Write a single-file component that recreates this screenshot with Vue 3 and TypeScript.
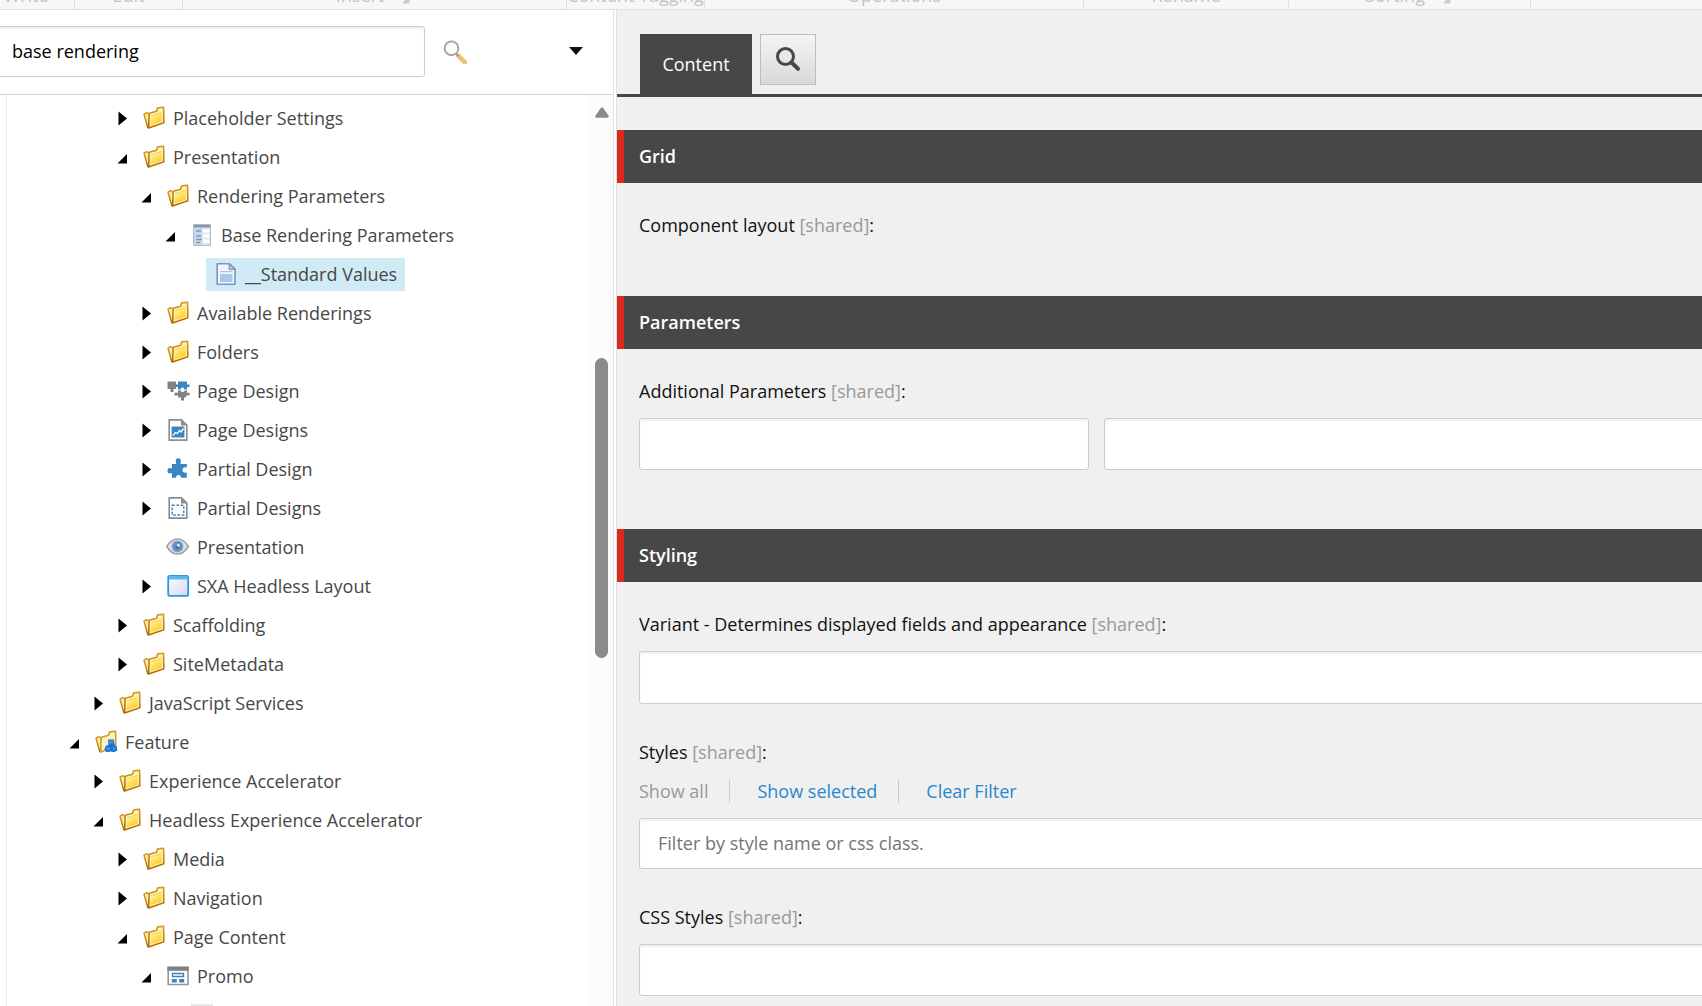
<script setup lang="ts">
import { ref } from 'vue'

type IconName =
  | 'folder' | 'template' | 'document' | 'page-design' | 'page-designs' | 'partial-design'
  | 'partial-designs' | 'eye' | 'window' | 'feature' | 'promo' | 'sheet'

interface TreeRow {
  label: string
  level: number
  icon: IconName
  state: 'open' | 'closed' | 'leaf'
}

interface RibbonGroup {
  label: string
  width: number
  launcher?: boolean
}

const searchText = ref('base rendering')
const selected = ref('__Standard Values')

const ribbon: RibbonGroup[] = [
  { label: 'Write', width: 97 },
  { label: 'Edit', width: 108 },
  { label: 'Insert', width: 384, launcher: true },
  { label: 'Content Tagging', width: 138 },
  { label: 'Operations', width: 379 },
  { label: 'Rename', width: 205 },
  { label: 'Sorting', width: 242, launcher: true },
]

const rows: TreeRow[] = [
  { label: 'Placeholder Settings', level: 2, icon: 'folder', state: 'closed' },
  { label: 'Presentation', level: 2, icon: 'folder', state: 'open' },
  { label: 'Rendering Parameters', level: 3, icon: 'folder', state: 'open' },
  { label: 'Base Rendering Parameters', level: 4, icon: 'template', state: 'open' },
  { label: '__Standard Values', level: 5, icon: 'document', state: 'leaf' },
  { label: 'Available Renderings', level: 3, icon: 'folder', state: 'closed' },
  { label: 'Folders', level: 3, icon: 'folder', state: 'closed' },
  { label: 'Page Design', level: 3, icon: 'page-design', state: 'closed' },
  { label: 'Page Designs', level: 3, icon: 'page-designs', state: 'closed' },
  { label: 'Partial Design', level: 3, icon: 'partial-design', state: 'closed' },
  { label: 'Partial Designs', level: 3, icon: 'partial-designs', state: 'closed' },
  { label: 'Presentation', level: 3, icon: 'eye', state: 'leaf' },
  { label: 'SXA Headless Layout', level: 3, icon: 'window', state: 'closed' },
  { label: 'Scaffolding', level: 2, icon: 'folder', state: 'closed' },
  { label: 'SiteMetadata', level: 2, icon: 'folder', state: 'closed' },
  { label: 'JavaScript Services', level: 1, icon: 'folder', state: 'closed' },
  { label: 'Feature', level: 0, icon: 'feature', state: 'open' },
  { label: 'Experience Accelerator', level: 1, icon: 'folder', state: 'closed' },
  { label: 'Headless Experience Accelerator', level: 1, icon: 'folder', state: 'open' },
  { label: 'Media', level: 2, icon: 'folder', state: 'closed' },
  { label: 'Navigation', level: 2, icon: 'folder', state: 'closed' },
  { label: 'Page Content', level: 2, icon: 'folder', state: 'open' },
  { label: 'Promo', level: 3, icon: 'promo', state: 'open' },
  { label: '', level: 4, icon: 'sheet', state: 'leaf' },
]
</script>

<template>
  <div class="editor">
    <svg class="defs" width="0" height="0" aria-hidden="true">
      <defs>
        <linearGradient id="gold" x1="0" y1="0" x2="0.6" y2="1">
          <stop offset="0" stop-color="#fffbe0" />
          <stop offset="0.4" stop-color="#ffe97a" />
          <stop offset="1" stop-color="#fac81a" />
        </linearGradient>
        <linearGradient id="goldEdge" x1="0" y1="0" x2="0" y2="1">
          <stop offset="0" stop-color="#d39a26" />
          <stop offset="1" stop-color="#b06c06" />
        </linearGradient>
        <linearGradient id="lilac" x1="0" y1="0" x2="1" y2="1">
          <stop offset="0" stop-color="#ffffff" />
          <stop offset="1" stop-color="#d8d4f4" />
        </linearGradient>
      </defs>
      <symbol id="i-folder" viewBox="0 0 24 24">
        <path d="M2 8.2 4.6 6.6 8 9 7 21.4 5.8 21.6Z" fill="#ffe9a0" stroke="url(#goldEdge)" stroke-width="1.4" stroke-linejoin="round" />
        <path d="M7.2 7.2 14.6 5.2 15.6 1.9 21.6 1.3 21.8 16.8 6.6 21.9Z" fill="#fff3b4" stroke="url(#goldEdge)" stroke-width="1.600" stroke-linejoin="round" />
        <path d="M9.4 9.6 19.6 6.6 19.6 15.600 8.200 19.6Z" fill="url(#gold)" />
        <path d="M9 9.8 19.6 6.4" stroke="#f1c94a" stroke-width="0.9" />
      </symbol>
      <symbol id="i-feature" viewBox="0 0 24 24">
        <path d="M2 8.2 4.6 6.6 8 9 7 21.4 5.8 21.6Z" fill="#ffe9a0" stroke="url(#goldEdge)" stroke-width="1.4" stroke-linejoin="round" />
        <path d="M7.2 7.2 14.6 5.2 15.6 1.9 21.6 1.3 21.8 16.8 6.6 21.9Z" fill="#fff0c0" stroke="#cf9a35" stroke-width="1.600" stroke-linejoin="round" />
        <path d="M14.2 9.6h5.6l1 5.6 2 1.6.6 3.6-3.4 1.8-3.2-.6-4.4.6-2-3 1.4-3.4 2.6-.8Z" fill="#1b70d2" />
        <path d="M14.6 10.4h4.4l.3 3.2-4.6.4ZM12.2 17h3.4l.4 3h-3.6ZM18.6 17h2.6l.6 2.4-2.6 1Z" fill="#3d8ee6" />
      </symbol>
      <symbol id="i-template" viewBox="0 0 24 24">
        <path d="M3.500 1.500H20.500V22.500H3.500Z" fill="#e3e6ec" stroke="#b4b8c0" />
        <path d="M4 2H20V4.500H4Z" fill="#8494b4" />
        <path d="M4 5h8v17H4Z" fill="#c3d8ee" />
        <path d="M13 6.500h6.500v3H13ZM13 11.500h6.500v3H13ZM13 16.500h6.500v3H13Z" fill="#fff" />
        <path d="M6 8h5M6 13h5M6 16.500h6M6 19.500h4" stroke="#8796b0" stroke-width="1.3" />
      </symbol>
      <symbol id="i-document" viewBox="0 0 24 24">
        <path d="M3.200 1.800H15.500L21 7V22.300H3.200Z" fill="#f1f6fd" stroke="#7d95bb" stroke-width="1.6" stroke-linejoin="round" />
        <path d="M15.200 2V7.300H21Z" fill="#c6d7ee" stroke="#7d95bb" stroke-width="1.200" stroke-linejoin="round" />
        <path d="M6 9.700h12.500" stroke="#9cb6da" />
        <path d="M6 12H18.500V20H6Z" fill="#a6c9ea" />
      </symbol>
      <symbol id="i-page-design" viewBox="0 0 24 24">
        <path d="M1.500 2.500H10V10H7.500V13H4.500V10H1.500Z" fill="#828282" />
        <path d="M12 2.500H21V5.500H23.500V8H21V10.500H18.500Q18.500 8.500 16.500 8.500T14.500 10.500H12V8H9.500V5.500H12Z" fill="#3c85c1" />
        <path d="M12 11.500H15Q14.500 13 16.500 13T18.500 11.500H21V13.800H23.500V16.500H20V18.500H18V21.500H15V18.500H12V16.500H8.500V13.800H12Z" fill="#828282" />
      </symbol>
      <symbol id="i-page-designs" viewBox="0 0 24 24">
        <path d="M3.200 1.900H15.500L20.800 7V22.100H3.200Z" fill="#fff" stroke="#8c8c8c" stroke-width="1.600" />
        <path d="M15 2V7.500H21Z" fill="#8c8c8c" />
        <path d="M5.600 8.500H18.400V19.500H5.600Z" fill="#3c85c1" />
        <path d="M7 17.500 9.500 14.500 11.500 15.500 13.500 12.500 15 14 17.500 10.500" fill="none" stroke="#fff" stroke-width="1.300" />
      </symbol>
      <symbol id="i-partial-design" viewBox="0 0 24 24">
        <path d="M8 7H10.300Q8.500 1.300 12.300 1.300T14.400 7H20.800V10.500Q16.500 9.800 16.500 13T20.800 15.500V20.800H15Q15 18 12.500 18T10 20.800H6V16Q1.500 17.500 1.500 13.700T6 11.500V7Z" fill="#3c85c1" />
      </symbol>
      <symbol id="i-partial-designs" viewBox="0 0 24 24">
        <path d="M3.200 1.900H15.500L20.800 7V22.100H3.200Z" fill="#fff" stroke="#8c8c8c" stroke-width="1.600" />
        <path d="M15 2V7.500H21Z" fill="#8c8c8c" />
        <path d="M6.200 9.200H17.800V19H6.200Z" fill="none" stroke="#3c85c1" stroke-width="1.400" stroke-dasharray="2.600 1.600" />
      </symbol>
      <symbol id="i-eye" viewBox="0 0 24 24">
        <path d="M0.800 11.500Q5 4 11.500 4T22.300 11.500Q18 19 11.500 19T0.800 11.500Z" fill="#e2e2e2" stroke="#a4a4a4" stroke-width="1.600" />
        <circle cx="11.500" cy="11.500" r="6" fill="#86abd6" />
        <circle cx="11.500" cy="11.500" r="4.800" fill="#5f90c8" />
        <circle cx="11.500" cy="11.800" r="2" fill="#47678f" />
        <circle cx="12.300" cy="10.300" r="1.500" fill="#dceafa" />
      </symbol>
      <symbol id="i-window" viewBox="0 0 24 24">
        <rect x="2.200" y="1.800" width="20" height="20" rx="1.600" fill="url(#lilac)" stroke="#2f98dc" stroke-width="1.800" />
        <path d="M2.800 2.400H21.600V5.500H2.800Z" fill="#58bbee" />
      </symbol>
      <symbol id="i-promo" viewBox="0 0 24 24">
        <path d="M2.200 3.500H22V20.500H2.200Z" fill="#fff" stroke="#92969c" stroke-width="1.600" />
        <path d="M1.400 2.600H22.800V6.800H1.400Z" fill="#7e8084" />
        <path d="M6.500 9.500H17.500V12.500H6.500Z" fill="#fff" stroke="#3c85c1" stroke-width="1.400" />
        <path d="M5.800 15H10.800V18.500H5.800ZM13.200 15H18.200V18.500H13.200Z" fill="#3c85c1" />
      </symbol>
      <symbol id="i-sheet" viewBox="0 0 24 24">
        <path d="M1.500 2H22.500V22H1.500Z" fill="#ececec" stroke="#dcdcdc" />
      </symbol>
    </svg>

    <header class="ribbon">
      <div v-for="g in ribbon" :key="g.label" class="ribbon-group" :style="{ width: g.width + 'px' }">
        <span>{{ g.label }}</span>
        <svg v-if="g.launcher" class="launcher" viewBox="0 0 14 14" aria-hidden="true">
          <path d="M1 6 5 10M13 5V13H7Z" fill="#ccc" stroke="#ccc" />
        </svg>
      </div>
    </header>

    <div class="workspace">
      <aside class="sidebar">
        <form class="search" @submit.prevent>
          <input v-model="searchText" class="search-box" type="text" aria-label="Search" />
          <button class="icon-button" type="submit" aria-label="Search">
            <svg width="24" height="24" viewBox="0 0 24 24">
              <path d="M15.500 16 22 22.300" stroke="#e6c27a" stroke-width="4.600" stroke-linecap="round" />
              <path d="M12.500 13.200 15.500 16" stroke="#999" stroke-width="2" />
              <circle cx="8.500" cy="8.300" r="6.900" fill="#fbfbfb" stroke="#a4a4a4" stroke-width="1.900" />
            </svg>
          </button>
          <button class="icon-button options" type="button" aria-label="Search options">
            <svg width="14" height="8" viewBox="0 0 14 8"><path d="M0 0H14L7 8Z" fill="#111" /></svg>
          </button>
        </form>

        <div class="tree-area">
          <ul class="tree">
            <li v-for="(row, i) in rows" :key="i" class="tree-row" :style="{ paddingLeft: row.level * 24 + 'px' }">
              <span class="toggle">
                <svg v-if="row.state === 'closed'" width="24" height="24" viewBox="0 0 24 24" aria-hidden="true">
                  <path d="M8.500 5.500 17 12.500 8.500 19.500Z" fill="#000" />
                </svg>
                <svg v-else-if="row.state === 'open'" width="24" height="24" viewBox="0 0 24 24" aria-hidden="true">
                  <path d="M17 9V18.500H7.500Z" fill="#000" />
                </svg>
              </span>
              <a href="#" class="node" :class="{ active: row.label === selected }" @click.prevent="selected = row.label">
                <svg width="24" height="24" aria-hidden="true"><use :href="'#i-' + row.icon" /></svg>
                <span>{{ row.label }}</span>
              </a>
            </li>
          </ul>
          <div class="scrollbar" aria-hidden="true">
            <svg width="14" height="11" viewBox="0 0 14 11"><path d="M5.800 .9Q7-.5 8.200 .9L13.600 8.700Q14.300 10.500 12.500 10.800H1.500Q-.3 10.500.4 8.700Z" fill="#8b8b8b" /></svg>
            <div class="thumb"></div>
          </div>
        </div>
      </aside>

      <main class="content">
        <nav class="tabs">
          <button class="tab" type="button">Content</button>
          <button class="tab-search" type="button" aria-label="Search fields">
            <svg width="26" height="26" viewBox="0 0 26 26">
              <circle cx="10.500" cy="10.500" r="8" fill="none" stroke="#474747" stroke-width="3" />
              <path d="M16.500 16.500 23 22.800" stroke="#474747" stroke-width="4" stroke-linecap="round" />
            </svg>
          </button>
        </nav>

        <section>
          <h2>Grid</h2>
          <div class="fields">
            <div class="field">
              <div class="label">Component layout <i>[shared]</i>:</div>
            </div>
          </div>
        </section>

        <section>
          <h2>Parameters</h2>
          <div class="fields">
            <div class="field">
              <label class="label" for="param-name">Additional Parameters <i>[shared]</i>:</label>
              <div class="pair">
                <input id="param-name" class="box key" type="text" />
                <input class="box" type="text" aria-label="Additional parameter value" />
              </div>
            </div>
          </div>
        </section>

        <section>
          <h2>Styling</h2>
          <div class="fields">
            <div class="field">
              <label class="label" for="variant">Variant - Determines displayed fields and appearance <i>[shared]</i>:</label>
              <input id="variant" class="box variant" type="text" />
            </div>
            <div class="field">
              <label class="label" for="styles">Styles <i>[shared]</i>:</label>
              <div class="filters">
                <span class="current">Show all</span>
                <a href="#" @click.prevent>Show selected</a>
                <a href="#" @click.prevent>Clear Filter</a>
              </div>
              <input id="styles" class="box filter" type="text" placeholder="Filter by style name or css class." />
            </div>
            <div class="field">
              <label class="label" for="css-styles">CSS Styles <i>[shared]</i>:</label>
              <input id="css-styles" class="box" type="text" />
            </div>
          </div>
        </section>
      </main>
    </div>
  </div>
</template>

<style>
body {
  overflow: hidden;
}
</style>

<style scoped>
.editor {
  display: flex;
  flex-direction: column;
  height: 100vh;
  overflow: hidden;
  background: #fff;
  color: #111;
  font: 18px/24px "Open Sans", sans-serif;
}
.editor *,
.editor {
  box-sizing: border-box;
}
.defs {
  position: absolute;
}
button,
input {
  font: inherit;
}
.ribbon {
  display: flex;
  flex: none;
  height: 10px;
  overflow: hidden;
  background: #f7f7f7;
  border-bottom: 1px solid #e0e0e0;
}
.ribbon-group {
  display: flex;
  flex: none;
  align-items: flex-end;
  justify-content: center;
  gap: 12px;
  padding-bottom: 2px;
  border-right: 1px solid #e0e0e0;
  color: #c4c4c4;
  white-space: nowrap;
}
.ribbon-group:first-child {
  margin-left: -22px;
}
.launcher {
  flex: none;
  width: 14px;
  height: 14px;
  margin: 0 3px 3px 0;
}
.workspace {
  display: flex;
  flex: 1;
  min-height: 0;
}
.sidebar {
  display: flex;
  flex: none;
  flex-direction: column;
  width: 617px;
  border-right: 4px double #e2e2e2;
}
.search {
  display: flex;
  flex: none;
  align-items: center;
  height: 85px;
  padding-bottom: 1px;
  padding-right: 24px;
  border-bottom: 1px solid #d4d4d4;
}
.search-box {
  width: 429px;
  height: 51px;
  margin-left: -4px;
  padding: 0 15px 2px;
  border: 1px solid #ccc;
  border-radius: 3px;
  box-shadow: inset 0 2px 2px #f0f0f0;
  color: #000;
}
.icon-button {
  display: flex;
  margin-left: 18px;
  padding: 0;
  border: 0;
  background: none;
}
.options {
  margin-left: auto;
  padding: 6px 6px 8px;
}
.tree-area {
  display: flex;
  flex: 1;
  min-height: 0;
  margin-left: 6px;
  border-left: 1px solid #ececec;
}
.tree {
  flex: 1;
  margin: 0;
  padding: 4px 0 0 55px;
  overflow: hidden;
  list-style: none;
}
.tree-row {
  display: flex;
  align-items: center;
  height: 39px;
}
.toggle {
  display: flex;
  flex: none;
  width: 24px;
  padding-bottom: 2px;
}
.node {
  display: flex;
  align-items: center;
  gap: 7px;
  height: 33px;
  padding: 0 8px 2px;
  color: #474747;
  text-decoration: none;
  white-space: nowrap;
}
.active {
  background: #d0ebf6;
}
.scrollbar {
  display: flex;
  flex: none;
  flex-direction: column;
  align-items: center;
  width: 23px;
  padding-top: 12px;
  background: #fcfcfc;
}
.thumb {
  width: 13px;
  height: 300px;
  margin-top: 240px;
  border-radius: 7px;
  background: #8b8b8b;
}
.content {
  flex: 1;
  min-width: 0;
  overflow: hidden;
  background: #f0f0f0;
}
.tabs {
  display: flex;
  align-items: flex-start;
  gap: 8px;
  height: 87px;
  margin-bottom: 33px;
  padding: 24px 23px 0;
  border-bottom: 3px solid #474747;
}
.tab {
  width: 112px;
  height: 60px;
  padding: 0;
  border: 0;
  background: #474747;
  color: #fff;
}
.tab-search {
  display: flex;
  align-items: center;
  justify-content: center;
  width: 56px;
  height: 51px;
  padding: 0 0 2px;
  border: 1px solid #bdbdbd;
  background: linear-gradient(#f4f4f4, #d9d9d9);
}
h2 {
  margin: 0;
  padding: 14px 15px 15px;
  border-left: 7px solid #dc291e;
  background: #474747;
  color: #fff;
  font-size: 18px;
  font-weight: 600;
  line-height: 24px;
}
.fields {
  padding: 30px 0 23px 22px;
}
.field {
  margin-right: -24px;
  padding-bottom: 36px;
}
.label {
  display: block;
}
.label i {
  color: #999;
  font-style: normal;
}
.box {
  display: block;
  width: 100%;
  height: 52px;
  margin-top: 15px;
  padding: 0 18px 2px;
  border: 1px solid #ccc;
  border-radius: 3px;
  background: #fff;
  box-shadow: inset 0 2px 2px #f0f0f0;
}
.box::placeholder {
  color: #757575;
}
.variant {
  height: 53px;
}
.filter {
  height: 51px;
}
.pair {
  display: flex;
  gap: 15px;
}
.key {
  flex: none;
  width: 450px;
}
.filters {
  display: flex;
  margin-top: 15px;
  color: #999;
}
.filters > * {
  padding: 0 21px 0 27px;
  border-right: 1px solid #ccc;
}
.filters > :first-child {
  padding-left: 0;
}
.filters > :last-child {
  border-right: 0;
}
.filters a {
  color: #2b87c8;
  text-decoration: none;
}
</style>
